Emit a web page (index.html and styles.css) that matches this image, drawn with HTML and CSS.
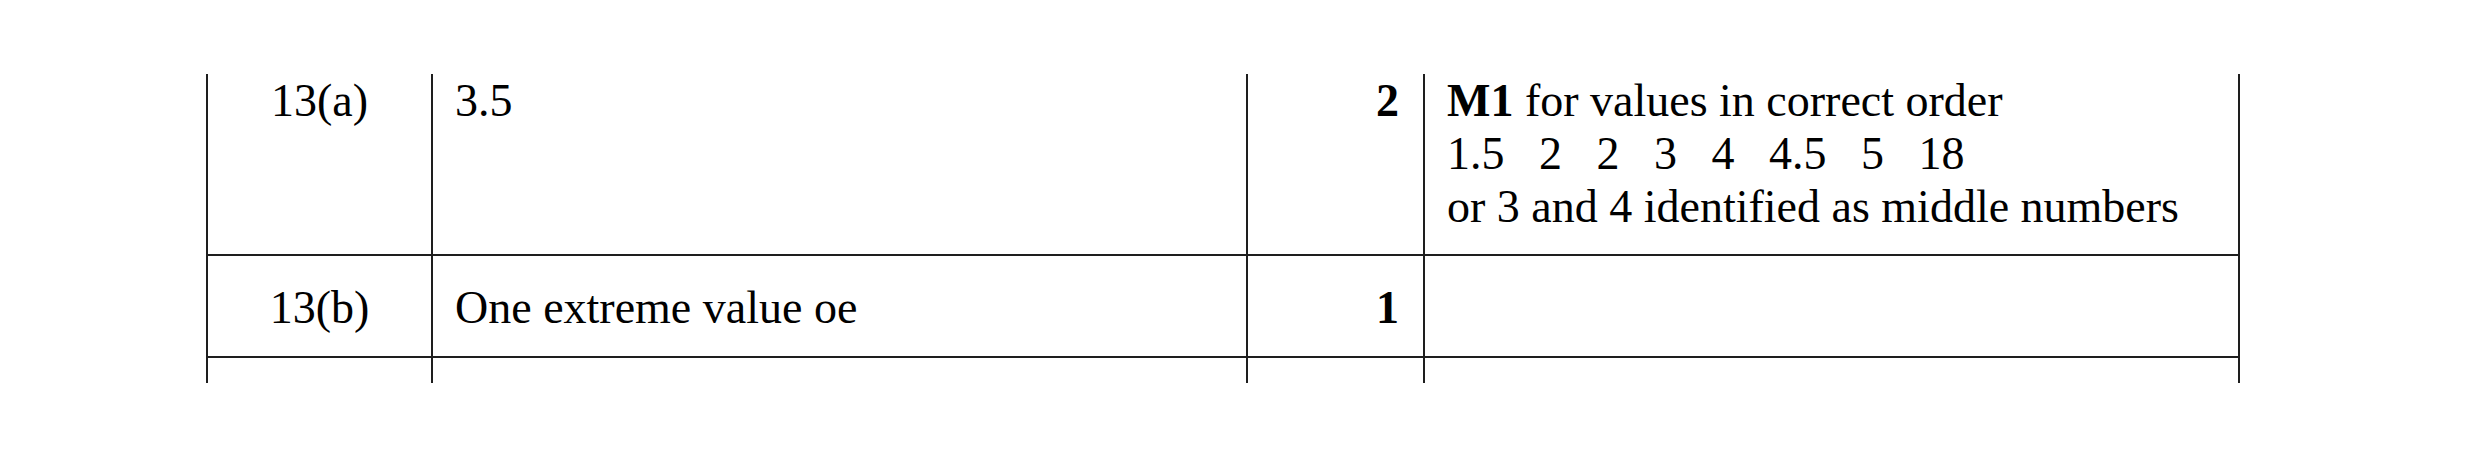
FILE: index.html
```html
<!DOCTYPE html>
<html>
<head>
<meta charset="utf-8">
<link rel="stylesheet" href="styles.css">
</head>
<body>
<div class="scheme">
  <div class="row row-a">
    <div class="cell part">13(a)</div>
    <div class="cell answer">3.5</div>
    <div class="cell mark">2</div>
    <div class="cell notes"><b>M1</b> for values in correct order<br><span class="pre">1.5   2   2   3   4   4.5   5   18</span><br>or 3 and 4 identified as middle numbers</div>
  </div>
  <div class="row row-b">
    <div class="cell part">13(b)</div>
    <div class="cell answer">One extreme value oe</div>
    <div class="cell mark">1</div>
    <div class="cell notes"></div>
  </div>
  <div class="row row-c">
    <div class="cell part"></div>
    <div class="cell answer"></div>
    <div class="cell mark"></div>
    <div class="cell notes"></div>
  </div>
</div>
</body>
</html>
```

FILE: styles.css
```css
html, body {
  margin: 0;
  padding: 0;
  background: #ffffff;
}
body {
  font-family: "Liberation Serif", "Times New Roman", serif;
  font-size: 46px;
  color: #000000;
}
.scheme {
  margin-left: 206px;
  padding-top: 74px;
  width: 2034px;
}
.row {
  display: grid;
  grid-template-columns: 225px 815px 177px 817px;
  border-bottom: 2px solid #1e1e1e;
  box-sizing: border-box;
}
.row-a { height: 182px; }
.row-b { height: 102px; }
.row-c { height: 25px; border-bottom: none; }
.cell {
  box-sizing: border-box;
  border-left: 2px solid #1e1e1e;
  line-height: 53px;
  padding: 0 22px 0 22px;
}
.cell.notes {
  border-right: 2px solid #1e1e1e;
}
.part { text-align: center; padding-left: 0; padding-right: 0; }
.mark { text-align: right; font-weight: bold; padding-right: 24px; }
.row-b .cell { padding-top: 25px; }
.pre { white-space: pre; }
b { font-weight: bold; }
```
